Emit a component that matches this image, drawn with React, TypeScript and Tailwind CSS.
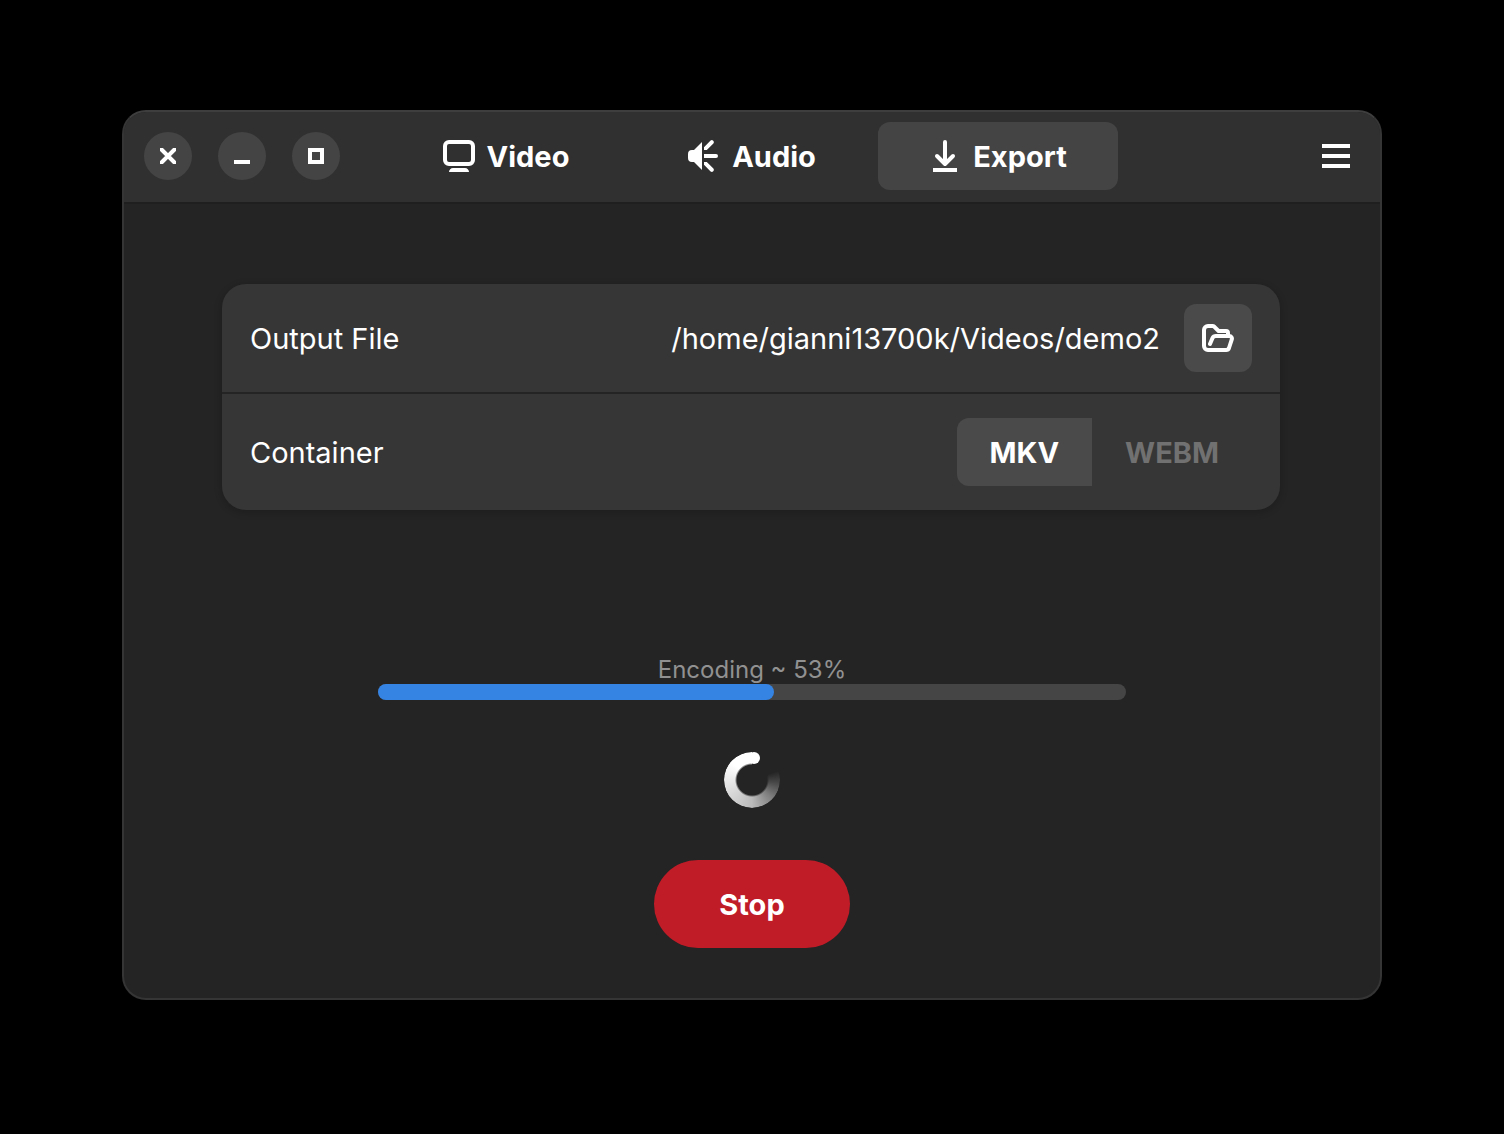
import { useState, type ReactNode } from "react";

function CloseIcon() {
  return (
    <svg viewBox="0 0 16 16" className="size-4" aria-hidden="true">
      <path d="M1.500 1.500l13 13M14.500 1.500l-13 13" stroke="currentColor" strokeWidth="4" strokeLinecap="round" />
    </svg>
  );
}

function MinimizeIcon() {
  return (
    <svg viewBox="0 0 16 16" className="size-4" aria-hidden="true">
      <path d="M0 12h16v4H0z" fill="currentColor" />
    </svg>
  );
}

function MaximizeIcon() {
  return (
    <svg viewBox="0 0 16 16" className="size-4" aria-hidden="true">
      <path d="M2 2h12v12H2z" fill="none" stroke="currentColor" strokeWidth="4" />
    </svg>
  );
}

function VideoIcon() {
  return (
    <svg viewBox="0 0 16 16" className="size-8" aria-hidden="true">
      <rect x="1" y="1" width="14" height="11" rx="2" fill="none" stroke="currentColor" strokeWidth="2" />
      <path d="M5 14h6c1.100 0 2 .9 2 2H3c0-1.100.9-2 2-2z" fill="currentColor" />
    </svg>
  );
}

function AudioIcon() {
  return (
    <svg viewBox="0 0 16 16" className="size-8" aria-hidden="true">
      <path d="M7 1v14L3 11H2a2 2 0 0 1-2-2V7a2 2 0 0 1 2-2h1z" fill="currentColor" />
      <path
        d="M8 3.600l3.300-3.300a1 1 0 0 1 1.400 1.400L9.400 5H8zM8 7h6a1 1 0 0 1 0 2H8zM8 12.400l3.300 3.300a1 1 0 0 0 1.400-1.400L9.400 11H8z"
        fill="currentColor"
      />
    </svg>
  );
}

function ExportIcon() {
  return (
    <svg viewBox="0 0 16 16" className="size-8" aria-hidden="true">
      <path
        d="M8 1v10.500M4 8l4 4 4-4"
        fill="none"
        stroke="currentColor"
        strokeWidth="2"
        strokeLinecap="round"
        strokeLinejoin="round"
      />
      <path d="M2 14h12v2H2z" fill="currentColor" />
    </svg>
  );
}

function MenuIcon() {
  return (
    <svg viewBox="0 0 16 16" className="size-8" aria-hidden="true">
      <path d="M1 2h14v2H1zM1 7h14v2H1zM1 12h14v2H1z" fill="currentColor" />
    </svg>
  );
}

function FolderIcon() {
  return (
    <svg viewBox="0 0 16 16" className="size-8" aria-hidden="true">
      <path
        d="M13 6.500V5.500c0-.6-.4-1-1-1H8.300L6.200 2.400A1.500 1.500 0 0 0 5.200 2H3a2 2 0 0 0-2 2v8a2 2 0 0 0 2 2h9.100a1.500 1.500 0 0 0 1.400-1l1.400-4.300A1.300 1.300 0 0 0 13.700 7H7a2 2 0 0 0-1.800 1.100L4 11"
        fill="none"
        stroke="currentColor"
        strokeWidth="2"
        strokeLinecap="round"
        strokeLinejoin="round"
      />
    </svg>
  );
}

function WindowButton({ label, children }: { label: string; children: ReactNode }) {
  return (
    <button
      type="button"
      aria-label={label}
      className="flex size-12 items-center justify-center rounded-full bg-[#444444]"
    >
      {children}
    </button>
  );
}

const tabs = [
  { name: "Video", icon: <VideoIcon /> },
  { name: "Audio", icon: <AudioIcon /> },
  { name: "Export", icon: <ExportIcon /> },
];

const containers = ["MKV", "WEBM"];

function Header() {
  const [active, setActive] = useState("Export");
  return (
    <header className="grid grid-cols-[1fr_auto_1fr] items-center border-b-2 border-[#1f1f1f] bg-[#303030] px-5 pt-2.5 pb-3">
      <div className="flex gap-[26px]">
        <WindowButton label="Close">
          <CloseIcon />
        </WindowButton>
        <WindowButton label="Minimize">
          <MinimizeIcon />
        </WindowButton>
        <WindowButton label="Maximize">
          <MaximizeIcon />
        </WindowButton>
      </div>
      <nav className="flex gap-1.5">
        {tabs.map((tab) => (
          <button
            key={tab.name}
            type="button"
            aria-pressed={tab.name === active}
            onClick={() => setActive(tab.name)}
            className={
              "flex h-[68px] w-60 items-center justify-center gap-3 rounded-xl font-bold " +
              (tab.name === active ? "bg-[#444444]" : "")
            }
          >
            {tab.icon}
            {tab.name}
          </button>
        ))}
      </nav>
      <button type="button" aria-label="Main menu" className="mr-2 justify-self-end">
        <MenuIcon />
      </button>
    </header>
  );
}

function Settings() {
  const [container, setContainer] = useState("MKV");
  return (
    <section className="mr-0.5 divide-y-2 divide-[#242424] rounded-3xl bg-[#363636] shadow-[0_2px_6px_2px_rgba(0,0,0,0.14)]">
      <div className="flex items-center px-7 py-5">
        <span>Output File</span>
        <span className="ml-auto">/home/gianni13700k/Videos/demo2</span>
        <button
          type="button"
          aria-label="Choose output file"
          className="ml-6 flex size-[68px] items-center justify-center rounded-xl bg-[#4a4a4a]"
        >
          <FolderIcon />
        </button>
      </div>
      <div className="flex items-center justify-between px-7 py-6">
        <span>Container</span>
        <div role="group" aria-label="Container" className="flex overflow-hidden rounded-xl">
          {containers.map((name) => (
            <button
              key={name}
              type="button"
              aria-pressed={name === container}
              onClick={() => setContainer(name)}
              className={
                "h-[68px] px-[33px] font-bold " +
                (name === container ? "bg-[#4a4a4a]" : "text-[#717171]")
              }
            >
              {name}
            </button>
          ))}
        </div>
      </div>
    </section>
  );
}

function Spinner() {
  return (
    <div role="status" aria-label="Encoding in progress" className="relative size-14">
      <div className="size-full rounded-full bg-[conic-gradient(transparent_70deg,#ffffff28_95deg,#ffffff68_130deg,#ffffffb0_180deg,#ffffffe0_260deg,#ffffff_310deg)] mask-[radial-gradient(circle,transparent_15px,black_17px)]" />
      <div className="absolute top-0 left-6 size-3 rounded-full bg-white" />
    </div>
  );
}

export default function App() {
  const progress = 53;
  return (
    <div className="flex min-h-screen flex-col bg-black px-[122px] pt-[110px] pb-[134px] font-['Inter',sans-serif] text-[29px] leading-[37px] text-white">
      <main className="flex grow flex-col overflow-hidden rounded-3xl border-2 border-[#353535] border-t-[#3e3e3e] bg-[#242424]">
        <Header />
        <div className="flex grow flex-col px-[98px] pt-20 pb-[50px]">
          <Settings />
          <div className="mt-auto flex flex-col items-center">
            <div className="w-full px-[156px] text-center">
              <div className="text-2xl leading-7 text-[#919191]">Encoding ~ {progress}%</div>
              <div
                role="progressbar"
                aria-label="Encoding"
                aria-valuenow={progress}
                aria-valuemin={0}
                aria-valuemax={100}
                className="h-4 rounded-full bg-[#454545]"
              >
                <div className="h-full rounded-full bg-[#3584e4]" style={{ width: `${progress}%` }} />
              </div>
            </div>
            <div className="mt-[52px]">
              <Spinner />
            </div>
            <button type="button" className="mt-[52px] h-[88px] w-[196px] rounded-full bg-[#c01c28] font-bold">
              Stop
            </button>
          </div>
        </div>
      </main>
    </div>
  );
}
